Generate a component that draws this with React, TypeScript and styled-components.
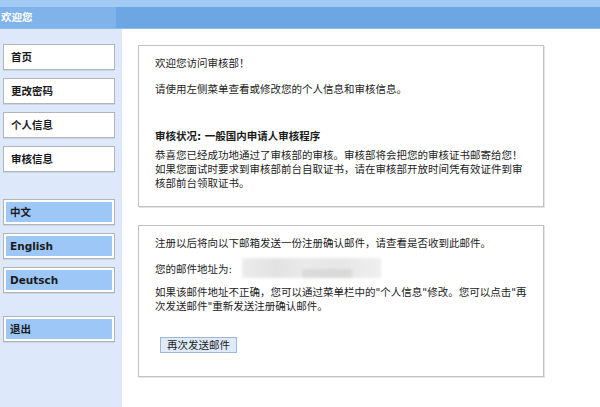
import styled, { createGlobalStyle } from "styled-components";

const GlobalStyle = createGlobalStyle`
  html, body {
    margin: 0;
    padding: 0;
    background: #ffffff;
  }
  body {
    font-family: "DejaVu Sans", "Noto Sans CJK SC", sans-serif;
    font-size: 10.5px;
    color: #1c1c1c;
  }
`;

const Page = styled.div`
  min-height: 100vh;
  display: flex;
  flex-direction: column;
`;

const TopBar = styled.div`
  height: 21px;
  border-top: 7px solid #a3c9f5;
  border-bottom: 1px solid #8dbbec;
  background: #6ca7e3;
  display: flex;
`;

const Greeting = styled.div`
  width: 115px;
  background: #80b3e9;
  color: #ffffff;
  font-weight: bold;
  line-height: 21px;
  padding-left: 1px;
`;

const Body = styled.div`
  flex: 1;
  display: grid;
  grid-template-columns: 122px 1fr;
`;

const Sidebar = styled.nav`
  background: #dde9fa;
  padding: 15px 0 0 3px;
  display: flex;
  flex-direction: column;
`;

const NavGroup = styled.div<{ $top: number }>`
  display: flex;
  flex-direction: column;
  gap: 8px;
  margin-top: ${p => p.$top}px;
`;

const NavItem = styled.div`
  width: 106px;
  height: 20px;
  padding: 2px;
  background: #ffffff;
  border: 1px solid #b4b4b4;
  box-shadow: 0 1px 0 #c9d6e8;
`;

const NavLabel = styled.div<{ $lang?: boolean }>`
  height: 20px;
  line-height: 20px;
  padding-left: ${p => (p.$lang ? 4 : 5)}px;
  background: ${p => (p.$lang ? "#9dc7f7" : "#ffffff")};
  font-weight: bold;
  color: #1a1a1a;
`;

const Main = styled.main`
  padding: 16px 0 24px 16px;
  display: flex;
  flex-direction: column;
  gap: 18px;
`;

const Panel = styled.section<{ $pad: number }>`
  width: 372px;
  padding: 10px 16px ${p => p.$pad}px 16px;
  border: 1px solid #c2c2c2;
  box-shadow: 1px 1px 0 #e4e4e4;
  background: #ffffff;
`;

const Text = styled.p<{ $top?: number }>`
  margin: ${p => p.$top ?? 0}px 0 0 0;
  line-height: 14px;
`;

const Heading = styled(Text)`
  font-weight: bold;
`;

const EmailRow = styled.div`
  margin-top: 8px;
  height: 20px;
  display: flex;
  align-items: center;
  gap: 10px;
`;

const Blurred = styled.span`
  width: 139px;
  height: 20px;
  background:
    linear-gradient(180deg, transparent 0 55%, rgba(200, 200, 200, 0.45) 55% 100%) 60px 0 / 50px 100% no-repeat,
    linear-gradient(90deg, #ececec 0%, #e2e2e2 25%, #eaeaea 45%, #e6e6e6 70%, #efefef 100%);
  filter: blur(1.5px);
`;

const ResendButton = styled.button`
  margin: 24px 0 0 5px;
  height: 16px;
  padding: 0 6px;
  font: inherit;
  line-height: 14px;
  color: #1c1c1c;
  background: #dfeafa;
  border: 1px solid #9fb6d8;
  border-radius: 0;
  cursor: pointer;
`;

const menu = ["首页", "更改密码", "个人信息", "审核信息"];
const languages = ["中文", "English", "Deutsch"];

export default function App() {
  return (
    <Page>
      <GlobalStyle />
      <TopBar>
        <Greeting>欢迎您</Greeting>
      </TopBar>
      <Body>
        <Sidebar>
          <NavGroup $top={0}>
            {menu.map(m => (
              <NavItem key={m}>
                <NavLabel>{m}</NavLabel>
              </NavItem>
            ))}
          </NavGroup>
          <NavGroup $top={27}>
            {languages.map(l => (
              <NavItem key={l}>
                <NavLabel $lang>{l}</NavLabel>
              </NavItem>
            ))}
          </NavGroup>
          <NavGroup $top={23}>
            <NavItem>
              <NavLabel $lang>退出</NavLabel>
            </NavItem>
          </NavGroup>
        </Sidebar>
        <Main>
          <Panel $pad={16}>
            <Text>欢迎您访问审核部！</Text>
            <Text $top={12}>请使用左侧菜单查看或修改您的个人信息和审核信息。</Text>
            <Heading $top={33}>审核状况: 一般国内申请人审核程序</Heading>
            <Text $top={5}>
              恭喜您已经成功地通过了审核部的审核。审核部将会把您的审核证书邮寄给您！
              <br />
              如果您面试时要求到审核部前台自取证书，请在审核部开放时间凭有效证件到审核部前台领取证书。
            </Text>
          </Panel>
          <Panel $pad={23}>
            <Text>注册以后将向以下邮箱发送一份注册确认邮件，请查看是否收到此邮件。</Text>
            <EmailRow>
              <span>您的邮件地址为:</span>
              <Blurred />
            </EmailRow>
            <Text $top={7}>
              如果该邮件地址不正确，您可以通过菜单栏中的"个人信息"修改。您可以点击"再次发送邮件"重新发送注册确认邮件。
            </Text>
            <ResendButton>再次发送邮件</ResendButton>
          </Panel>
        </Main>
      </Body>
    </Page>
  );
}
